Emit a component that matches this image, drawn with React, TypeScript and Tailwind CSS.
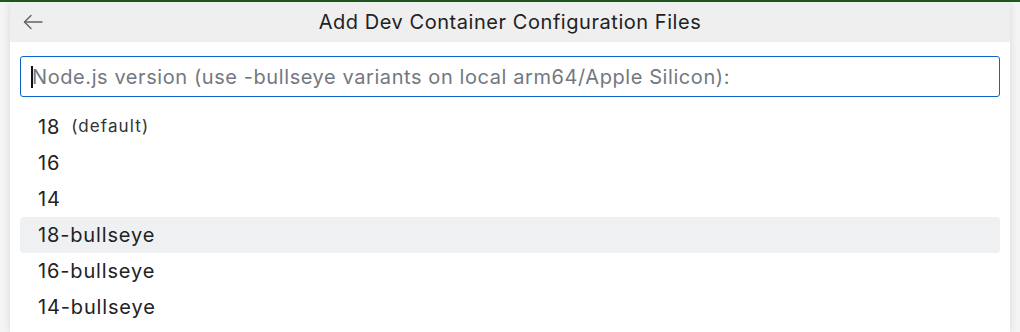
import React from 'react';

const items = [
  { id: '18', label: '18', note: '(default)' },
  { id: '16', label: '16' },
  { id: '14', label: '14' },
  { id: '18b', label: '18-bullseye', active: true },
  { id: '16b', label: '16-bullseye' },
  { id: '14b', label: '14-bullseye' },
];

const App: React.FC = () => {
  return (
    <div className="w-[1020px] h-[332px] overflow-hidden bg-[#f4f4f4] flex flex-col" style={{ fontFamily: 'Inter, "Noto Sans", sans-serif' }}>
      <div className="h-[2px] bg-[#1d5a1f] shrink-0" />
      <div className="flex-1 flex px-[10px]">
        <div className="flex-1 bg-white rounded-t-[6px] shadow-[0_0_8px_rgba(0,0,0,0.12)] flex flex-col overflow-hidden">
          {/* header */}
          <div className="h-[40px] bg-[#efefef] flex items-center relative shrink-0">
            <svg className="absolute left-[13px] top-[12px] w-[20px] h-[16px] text-[#5f6368]" viewBox="0 0 20 16" fill="none" stroke="currentColor" strokeWidth="1.4" strokeLinecap="round" strokeLinejoin="round">
              <path d="M19 8H1.5" />
              <path d="M8 1.5L1.5 8L8 14.5" />
            </svg>
            <div className="flex-1 text-center text-[20px] text-[#222] tracking-[0.55px]">Add Dev Container Configuration Files</div>
          </div>
          {/* input */}
          <div className="px-[10px] pt-[14px] pb-[12px]">
            <div className="h-[41px] border border-[#0a66c8] rounded-[3px] flex items-center pl-[10px]">
              <span className="w-[2px] h-[22px] bg-[#111] mr-[-1px]" />
              <span className="text-[20px] text-[#737880] tracking-[0.58px]">Node.js version (use -bullseye variants on local arm64/Apple Silicon):</span>
            </div>
          </div>
          {/* list */}
          <div className="px-[10px] flex flex-col">
            {items.map((item) => (
              <div
                key={item.id}
                className={`h-[36px] flex items-center pl-[18px] rounded-[4px] ${item.active ? 'bg-[#eff0f2]' : ''}`}
              >
                <span className="text-[20px] text-[#222] tracking-[0.85px]">{item.label}</span>
                {item.note && <span className="ml-[11px] text-[17px] text-[#333] tracking-[1.1px]">{item.note}</span>}
              </div>
            ))}
          </div>
        </div>
      </div>
    </div>
  );
};

export default App;
